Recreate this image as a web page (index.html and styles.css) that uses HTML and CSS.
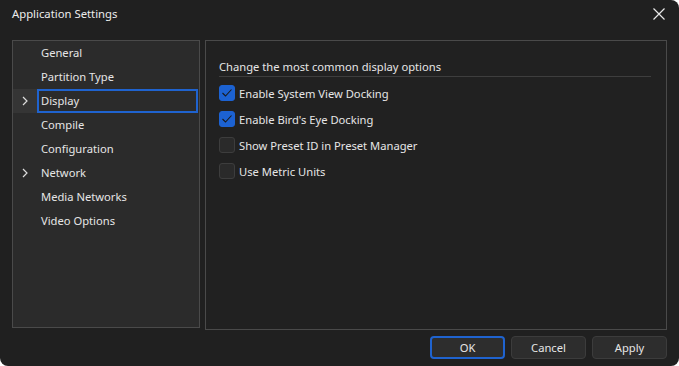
FILE: index.html
```html
<!DOCTYPE html>
<html lang="en">
<head>
  <meta charset="UTF-8">
  <title>Application Settings</title>
  <link rel="stylesheet" href="styles.css">
</head>
<body>
  <div class="dialog">
    <div class="titlebar">
      <span class="title">Application Settings</span>
      <button class="close" aria-label="Close">
        <svg width="12" height="12" viewBox="0 0 12 12"><path d="M0.5 0.5 L11.5 11.5 M11.5 0.5 L0.5 11.5" stroke="#e8e8e8" stroke-width="1.2"/></svg>
      </button>
    </div>

    <div class="main">
      <ul class="nav">
        <li class="nav-item"><span class="arrow"></span><span class="label">General</span></li>
        <li class="nav-item"><span class="arrow"></span><span class="label">Partition Type</span></li>
        <li class="nav-item selected"><span class="arrow"><svg width="6" height="10" viewBox="0 0 6 10"><path d="M1 1 L5 5 L1 9" fill="none" stroke="#ddd" stroke-width="1.2"/></svg></span><span class="label">Display</span></li>
        <li class="nav-item"><span class="arrow"></span><span class="label">Compile</span></li>
        <li class="nav-item"><span class="arrow"></span><span class="label">Configuration</span></li>
        <li class="nav-item"><span class="arrow"><svg width="6" height="10" viewBox="0 0 6 10"><path d="M1 1 L5 5 L1 9" fill="none" stroke="#ddd" stroke-width="1.2"/></svg></span><span class="label">Network</span></li>
        <li class="nav-item"><span class="arrow"></span><span class="label">Media Networks</span></li>
        <li class="nav-item"><span class="arrow"></span><span class="label">Video Options</span></li>
      </ul>

      <div class="page">
        <div class="page-head">Change the most common display options</div>
        <label class="check"><span class="box on"><svg width="12" height="10" viewBox="0 0 12 10"><path d="M1.5 5 L4.5 8 L10.5 1.5" fill="none" stroke="#1a1a1a" stroke-width="1.1"/></svg></span>Enable System View Docking</label>
        <label class="check"><span class="box on"><svg width="12" height="10" viewBox="0 0 12 10"><path d="M1.5 5 L4.5 8 L10.5 1.5" fill="none" stroke="#1a1a1a" stroke-width="1.1"/></svg></span>Enable Bird's Eye Docking</label>
        <label class="check"><span class="box"></span>Show Preset ID in Preset Manager</label>
        <label class="check"><span class="box"></span>Use Metric Units</label>
      </div>
    </div>

    <div class="buttons">
      <button class="btn default">OK</button>
      <button class="btn">Cancel</button>
      <button class="btn">Apply</button>
    </div>
  </div>
</body>
</html>
```

FILE: styles.css
```css
body {
  margin: 0; background: #ffffff;
  font-family: 'Noto Sans', 'Open Sans', sans-serif;
  font-size: 11.2px; color: #e6e6e6;
}
.dialog {
  width: 679px; height: 366px; box-sizing: border-box;
  background: #202020;
  border-radius: 0 8px 8px 8px;
  display: flex; flex-direction: column;
}
.titlebar {
  height: 40px; display: flex; align-items: flex-start;
  justify-content: space-between;
}
.title { margin: 5px 0 0 12px; font-size: 11.3px; line-height: 18px; color: #ececec; }
.close {
  background: none; border: 0; padding: 0; margin: 8px 14px 0 0;
  width: 12px; height: 12px; display: flex;
}
.main { display: flex; gap: 5px; padding: 0 12px 0 12px; }
.nav {
  list-style: none; margin: 0; padding: 0;
  width: 188px; height: 288px; box-sizing: border-box;
  background: #2b2b2b; border: 1px solid #4a4a4a;
}
.nav-item { display: flex; height: 24px; align-items: stretch; }
.nav-item .arrow { width: 24px; display: flex; align-items: center; justify-content: center; }
.nav-item .label {
  flex: 1; display: flex; align-items: center;
  padding: 0 0 2px 2px; margin-right: 1px; border: 2px solid transparent;
}
.nav-item.selected .arrow { background: #353535; }
.nav-item.selected .label { border-color: #1f63cf; background: #2b2b2b; }
.page {
  flex: 1; height: 290px; box-sizing: border-box;
  border: 1px solid #4a4a4a; background: #212121;
  padding: 17px 15px 0 13px;
}
.page-head {
  padding-bottom: 1px; border-bottom: 1px solid #3e3e3e;
  line-height: 17px; margin-bottom: 3px;
}
.check { display: flex; align-items: center; height: 26px; gap: 4px; }
.box {
  width: 14px; height: 14px; border: 1px solid #3d3d3d;
  border-radius: 3px; background: #2a2a2a;
  display: flex; align-items: center; justify-content: center;
}
.box.on { background: #1c62d2; border-color: #1c62d2; }
.buttons {
  display: flex; justify-content: flex-end; gap: 6px;
  padding: 6px 12px 0 0;
}
.btn {
  width: 75px; height: 23px; box-sizing: border-box;
  background: #2d2d2d; border: 1px solid #3c3c3c; border-radius: 4px;
  color: #e6e6e6; font-family: inherit; font-size: 11.2px; padding: 0;
}
.btn.default { border: 2px solid #1f63cf; }
```
